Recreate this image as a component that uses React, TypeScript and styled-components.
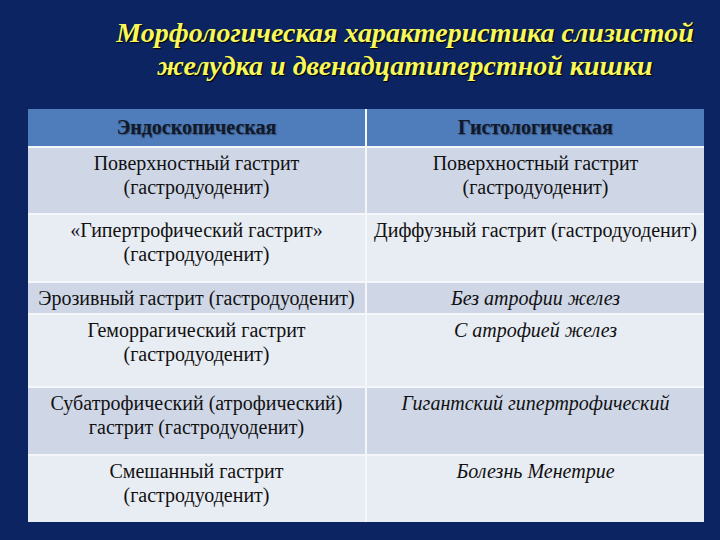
import { Fragment } from "react";
import styled, { createGlobalStyle } from "styled-components";

const GlobalStyle = createGlobalStyle`
  html, body {
    margin: 0;
    padding: 0;
    background: #0c2462;
    font-family: "Liberation Serif", "Times New Roman", serif;
  }
`;

const Slide = styled.div`
  width: 720px;
  height: 540px;
  background: #0c2462;
  overflow: hidden;
  display: flex;
  flex-direction: column;
  align-items: flex-start;
`;

const Title = styled.h1`
  margin: 0;
  padding: 16px 0 0 90px;
  width: 630px;
  text-align: center;
  font-family: "Liberation Serif", "Times New Roman", serif;
  font-size: 28px;
  line-height: 33px;
  font-weight: bold;
  font-style: italic;
  color: #f8f85a;
  text-shadow: 1px 1px 1px #000000;
  white-space: nowrap;
`;

const Table = styled.div`
  margin: 27px 0 0 28px;
  width: 676px;
  display: grid;
  grid-template-columns: 1fr 1fr;
  grid-template-rows: 37px 65px 66px 30px 71px 66px 66px;
  gap: 2px;
  background: #f4f6fa;
`;

const HeadCell = styled.div`
  background: #4f7dbb;
  display: flex;
  align-items: center;
  justify-content: center;
  font-size: 20px;
  font-weight: bold;
  color: #10182c;
  text-shadow: 1px 1px 1px rgba(0, 0, 0, 0.35);
`;

const Cell = styled.div<{ $odd: boolean; $italic?: boolean }>`
  background: ${(p) => (p.$odd ? "#cfd7e7" : "#e8ecf3")};
  padding: 3px 2px 0;
  text-align: center;
  font-size: 20px;
  line-height: 24px;
  color: #111111;
  white-space: nowrap;
  font-style: ${(p) => (p.$italic ? "italic" : "normal")};
`;

type Row = { left: string[]; right: string[]; italic?: boolean };

const rows: Row[] = [
  {
    left: ["Поверхностный гастрит", "(гастродуоденит)"],
    right: ["Поверхностный гастрит", "(гастродуоденит)"],
  },
  {
    left: ["«Гипертрофический гастрит»", "(гастродуоденит)"],
    right: ["Диффузный гастрит (гастродуоденит)"],
  },
  {
    left: ["Эрозивный гастрит (гастродуоденит)"],
    right: ["Без атрофии желез"],
    italic: true,
  },
  {
    left: ["Геморрагический гастрит", "(гастродуоденит)"],
    right: ["С атрофией желез"],
    italic: true,
  },
  {
    left: ["Субатрофический (атрофический)", "гастрит (гастродуоденит)"],
    right: ["Гигантский гипертрофический"],
    italic: true,
  },
  {
    left: ["Смешанный гастрит", "(гастродуоденит)"],
    right: ["Болезнь Менетрие"],
    italic: true,
  },
];

const Lines = ({ lines }: { lines: string[] }) => (
  <>
    {lines.map((l, i) => (
      <div key={i}>{l}</div>
    ))}
  </>
);

export default function App() {
  return (
    <Slide>
      <GlobalStyle />
      <Title>
        Морфологическая характеристика слизистой
        <br />
        желудка и двенадцатиперстной кишки
      </Title>
      <Table>
        <HeadCell>Эндоскопическая</HeadCell>
        <HeadCell>Гистологическая</HeadCell>
        {rows.map((r, i) => (
          <Fragment key={i}>
            <Cell $odd={i % 2 === 0}>
              <Lines lines={r.left} />
            </Cell>
            <Cell $odd={i % 2 === 0} $italic={r.italic}>
              <Lines lines={r.right} />
            </Cell>
          </Fragment>
        ))}
      </Table>
    </Slide>
  );
}
